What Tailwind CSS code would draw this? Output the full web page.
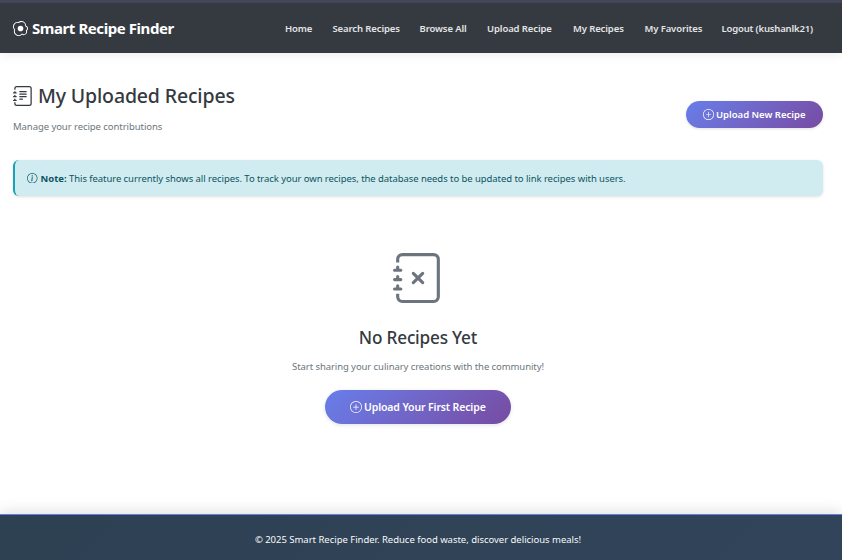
<!DOCTYPE html>
<html lang="en">
<head>
<meta charset="utf-8">
<title>My Uploaded Recipes</title>
<script src="https://cdn.jsdelivr.net/npm/@tailwindcss/browser@4"></script>
</head>
<body class="flex h-[560px] w-[842px] flex-col overflow-hidden bg-white font-['Noto_Sans','Open_Sans',sans-serif] text-[#343a40]">
<svg class="hidden">
  <symbol id="journal" viewBox="0 0 16 16"><path d="M3 0h10a2 2 0 0 1 2 2v12a2 2 0 0 1-2 2H3a2 2 0 0 1-2-2v-1h1v1a1 1 0 0 0 1 1h10a1 1 0 0 0 1-1V2a1 1 0 0 0-1-1H3a1 1 0 0 0-1 1v1H1V2a2 2 0 0 1 2-2"/><path d="M1 5v-.5a.5.5 0 0 1 1 0V5h.5a.5.5 0 0 1 0 1h-2a.5.5 0 0 1 0-1zm0 3v-.5a.5.5 0 0 1 1 0V8h.5a.5.5 0 0 1 0 1h-2a.5.5 0 0 1 0-1zm0 3v-.5a.5.5 0 0 1 1 0v.5h.5a.5.5 0 0 1 0 1h-2a.5.5 0 0 1 0-1z"/></symbol>
  <symbol id="plus" viewBox="0 0 16 16"><path d="M8 15A7 7 0 1 1 8 1a7 7 0 0 1 0 14m0 1A8 8 0 1 0 8 0a8 8 0 0 0 0 16"/><path d="M8 4a.5.5 0 0 1 .5.5v3h3a.5.5 0 0 1 0 1h-3v3a.5.5 0 0 1-1 0v-3h-3a.5.5 0 0 1 0-1h3v-3A.5.5 0 0 1 8 4"/></symbol>
</svg>

<header class="flex h-[53px] shrink-0 items-center border-t-3 border-[#45455a] bg-[#353a41] pl-[13px] shadow-[0_2px_10px_rgba(0,0,0,0.08)]">
  <div class="flex w-[272px] items-center gap-1 text-white">
    <svg class="size-[15px]" viewBox="0 0 16 16" fill="currentColor"><path d="M8 11a3 3 0 1 0 0-6 3 3 0 0 0 0 6"/><path d="M13.997 5.17a5 5 0 0 0-8.101-4.09A5 5 0 0 0 1.28 9.342a5 5 0 0 0 8.336 5.109 3.5 3.5 0 0 0 5.201-4.065 3.001 3.001 0 0 0-.822-5.216zm-1-.034a1 1 0 0 0 .668.977 2.001 2.001 0 0 1 .547 3.478 1 1 0 0 0-.341 1.113 2.5 2.5 0 0 1-3.715 2.905 1 1 0 0 0-1.262.152 4 4 0 0 1-6.67-4.087 1 1 0 0 0-.2-1 4 4 0 0 1 3.693-6.61 1 1 0 0 0 .8-.2 4 4 0 0 1 6.48 3.273z"/></svg>
    <span class="whitespace-nowrap text-[15px] font-bold tracking-[-0.43px]">Smart Recipe Finder</span>
  </div>
  <nav class="flex whitespace-nowrap pt-[2px] text-[9.5px] font-semibold tracking-[-0.11px] text-[#e3e4e5]">
    <a class="w-[47.5px]">Home</a><a class="w-[87px]">Search Recipes</a><a class="w-[67.5px]">Browse All</a><a class="w-[86px]">Upload Recipe</a><a class="w-[71.5px]">My Recipes</a><a class="w-[77px]">My Favorites</a><a class="tracking-[-0.17px]">Logout (kushanlk21)</a>
  </nav>
</header>

<main class="flex-1 px-[13px] pr-[19px] whitespace-nowrap">
  <div class="flex h-[107px] items-start justify-between">
    <div class="pt-[28px]">
      <h1 class="flex h-[30px] items-center gap-[5px] text-[19.5px] font-medium tracking-[-0.15px]">
        <svg class="size-5" viewBox="0 0 16 16" fill="currentColor"><use href="#journal"/><path d="M5 10.5a.5.5 0 0 1 .5-.5h2a.5.5 0 0 1 0 1h-2a.5.5 0 0 1-.5-.5m0-2a.5.5 0 0 1 .5-.5h5a.5.5 0 0 1 0 1h-5a.5.5 0 0 1-.5-.5m0-2a.5.5 0 0 1 .5-.5h5a.5.5 0 0 1 0 1h-5a.5.5 0 0 1-.5-.5m0-2a.5.5 0 0 1 .5-.5h5a.5.5 0 0 1 0 1h-5a.5.5 0 0 1-.5-.5"/></svg>
        <span>My Uploaded Recipes</span>
      </h1>
      <p class="mt-2 text-[9.5px] leading-[16px] tracking-[-0.06px] text-[#6c757d]">Manage your recipe contributions</p>
    </div>
    <button class="mt-12 flex h-[27px] w-[137px] items-center gap-[2px] rounded-full bg-linear-135 from-[#667eea] to-[#764ba2] pl-[17px] text-[9.5px] font-semibold text-white shadow-[0_1px_3px_rgba(0,0,0,0.12)]">
      <svg class="size-[11px]" fill="currentColor"><use href="#plus"/></svg><span class="pt-px">Upload New Recipe</span>
    </button>
  </div>

  <div class="flex h-9 items-center gap-[3px] rounded-[6px] border-l-2 border-[#17a2b8] bg-[#d1ecf1] pl-3 text-[9.5px] text-[#0c5460] shadow-[0_1px_3px_rgba(0,0,0,0.13)]">
    <svg class="size-[10.5px]" viewBox="0 0 16 16" fill="currentColor"><path d="M8 15A7 7 0 1 1 8 1a7 7 0 0 1 0 14m0 1A8 8 0 1 0 8 0a8 8 0 0 0 0 16"/><path d="m8.93 6.588-2.29.287-.082.38.45.083c.294.07.352.176.288.469l-.738 3.468c-.194.897.105 1.319.808 1.319.545 0 1.178-.252 1.465-.598l.088-.416c-.2.176-.492.246-.686.246-.275 0-.375-.193-.304-.533zM9 4.5a1 1 0 1 1-2 0 1 1 0 0 1 2 0"/></svg>
    <b class="w-[25.5px] pt-[2px]">Note:</b><span class="pt-[2px] tracking-[-0.063px]">This feature currently shows all recipes. To track your own recipes, the database needs to be updated to link recipes with users.</span>
  </div>

  <section class="flex flex-col items-center pt-[57px]">
    <svg class="size-[50px] text-[#6c757d]" viewBox="0 0 16 16" fill="currentColor"><use href="#journal"/><path d="M6.146 6.146a.5.5 0 0 1 .708 0L8 7.293l1.146-1.147a.5.5 0 1 1 .708.708L8.707 8l1.147 1.146a.5.5 0 0 1-.708.708L8 8.707 6.854 9.854a.5.5 0 0 1-.708-.708L7.293 8 6.146 6.854a.5.5 0 0 1 0-.708"/></svg>
    <h2 class="mt-[23px] text-[17.2px] leading-[24px] font-medium tracking-[-0.2px]">No Recipes Yet</h2>
    <p class="mt-[9px] text-[9.5px] leading-[16px] tracking-[-0.075px] text-[#6c757d]">Start sharing your culinary creations with the community!</p>
    <button class="mt-[15px] flex h-[34px] w-[186px] items-center gap-[2px] rounded-full bg-linear-135 from-[#667eea] to-[#764ba2] pl-[25px] text-[10.5px] font-semibold tracking-[-0.13px] text-white shadow-[0_1px_4px_rgba(0,0,0,0.12)]">
      <svg class="size-[12px]" fill="currentColor"><use href="#plus"/></svg><span class="pt-[2px]">Upload Your First Recipe</span>
    </button>
  </section>
</main>

<footer class="flex h-[46px] shrink-0 justify-center border-t border-[#667eea] bg-linear-135 from-[#2e4153] to-[#31445a] pt-[17px] pr-[6px] text-[9.5px] leading-[16px] tracking-[-0.02px] text-[#f8f9fa] shadow-[0_-2px_14px_rgba(0,0,0,0.13)]">
  <p>© 2025 Smart Recipe Finder. Reduce food waste, discover delicious meals!</p>
</footer>
</body>
</html>
